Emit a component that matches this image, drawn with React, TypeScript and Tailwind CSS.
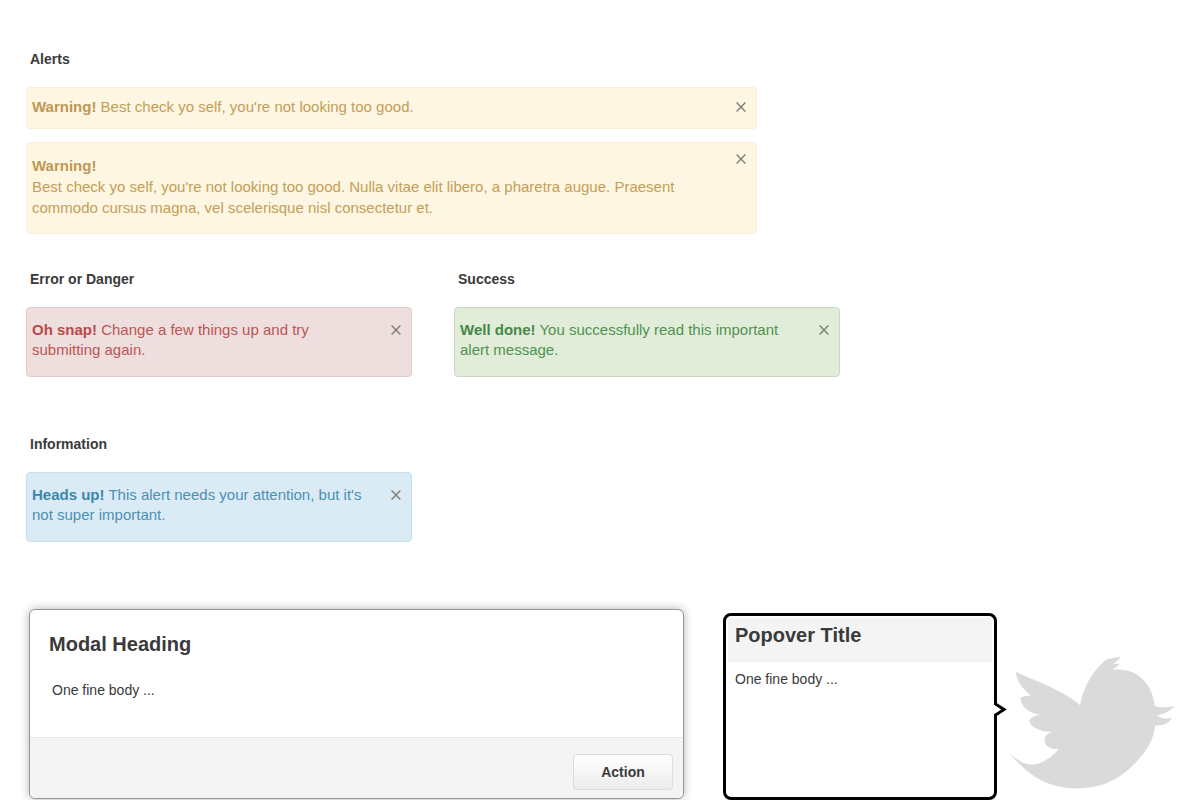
import type { ReactNode } from "react";

type Tone = "warning" | "danger" | "success" | "info";

const tones: Record<Tone, string> = {
  warning: "bg-[#fdf6e3] border-[#f9eedb] text-[#c49e57]",
  danger: "bg-[#efdede] border-[#e2cccd] text-[#bb5654]",
  success: "bg-[#e1edd9] border-[#c9d8c3] text-[#509350]",
  info: "bg-[#dbebf6] border-[#c7e0ea] text-[#4b90b3]",
};

const strongTones: Record<Tone, string> = {
  warning: "text-[#c09853]",
  danger: "text-[#b94a48]",
  success: "text-[#468847]",
  info: "text-[#3a87ad]",
};

function CloseIcon() {
  return (
    <svg viewBox="0 0 10 10" className="size-[10px]" aria-hidden="true">
      <path d="M0.6 0.6 9.4 9.4M9.4 0.6 0.6 9.4" stroke="#7f7d78" strokeWidth="1.4" fill="none" />
    </svg>
  );
}

function Alert({
  tone,
  title,
  className,
  stacked = false,
  children,
}: {
  tone: Tone;
  title: string;
  className: string;
  stacked?: boolean;
  children: ReactNode;
}) {
  return (
    <div
      role="alert"
      className={`flex items-start justify-between gap-4 rounded border px-[5px] text-[15px] ${tones[tone]} ${className}`}
    >
      <p className={stacked ? "pt-[6px] leading-[21px]" : "leading-5"}>
        <strong className={`${strongTones[tone]} ${stacked ? "block" : ""}`}>{title}</strong> {children}
      </p>
      <button type="button" aria-label="Close" className="flex size-5 shrink-0 items-center justify-center">
        <CloseIcon />
      </button>
    </div>
  );
}

function SectionTitle({ children }: { children: ReactNode }) {
  return <h2 className="mb-[18px] pl-1 text-sm leading-5 font-bold">{children}</h2>;
}

function Bird() {
  return (
    <svg viewBox="87 45 498 400" className="h-[133px] w-[166px]" role="img" aria-label="Bird">
      <path
        fill="#dadada"
        d="M106 92C145 112 190 127 229 147C257 161 282 175 300 193C308 149 331 94 378 56C391 51 407 52 423 46C418 56 409 64 399 69C406 68 413 68 419 68C414 76 405 82 396 86C422 84 445 87 464 97C499 116 520 151 525 195C544 202 563 199 583 196C574 210 553 220 531 223C546 235 560 235 577 231C568 247 550 256 526 254C523 293 500 333 463 370C419 416 367 440 307 443C235 446 178 423 139 389C119 372 103 355 87 338C106 352 128 370 151 371C184 373 213 351 237 325C213 326 192 316 194 298C193 285 203 279 216 273C180 274 151 259 147 240C150 230 164 226 181 221C146 218 120 197 122 169C131 166 142 165 153 164C128 147 111 121 106 92Z"
      />
    </svg>
  );
}

export default function App() {
  return (
    <main className="bg-white pt-[49px] pr-4 pl-[26px] font-['Liberation_Sans',Arial,sans-serif] text-[#3a3a3a]">
      <section className="max-w-[731px]">
        <SectionTitle>Alerts</SectionTitle>
        <div className="flex flex-col gap-[13px]">
          <Alert tone="warning" title="Warning!" className="pt-[9px] pb-[11px]">
            Best check yo self, you're not looking too good.
          </Alert>
          <Alert tone="warning" title="Warning!" stacked className="pt-[6px] pb-[15px]">
            <span className="block">
              Best check yo self, you're not looking too good. Nulla vitae elit libero, a pharetra augue. Praesent
              commodo cursus magna, vel scelerisque nisl consectetur et.
            </span>
          </Alert>
        </div>
      </section>

      <div className="mt-[35px] grid max-w-[814px] grid-cols-2 gap-x-[42px] gap-y-[57px]">
        <section>
          <SectionTitle>Error or Danger</SectionTitle>
          <Alert tone="danger" title="Oh snap!" className="pt-3 pb-4">
            Change a few things up and try submitting again.
          </Alert>
        </section>
        <section>
          <SectionTitle>Success</SectionTitle>
          <Alert tone="success" title="Well done!" className="pt-3 pb-4">
            You successfully read this important alert message.
          </Alert>
        </section>
        <section>
          <SectionTitle>Information</SectionTitle>
          <Alert tone="info" title="Heads up!" className="pt-3 pb-4">
            This alert needs your attention, but it's not super important.
          </Alert>
        </section>
      </div>

      <div className="mt-[67px] flex items-end">
        <section
          role="dialog"
          aria-labelledby="modal-title"
          className="mb-px ml-[3px] w-full max-w-[655px] rounded-md border border-[#969696] bg-white shadow-[0_0_10px_rgba(0,0,0,0.3)]"
        >
          <div className="px-[19px] pt-[22px] pb-[37px]">
            <h3 id="modal-title" className="text-xl leading-6 font-bold">
              Modal Heading
            </h3>
            <p className="mt-6 pl-[3px] text-sm leading-5">One fine body ...</p>
          </div>
          <footer className="flex justify-end rounded-b-md border-t border-[#e6e6e6] bg-[#f4f4f4] pt-4 pr-[10px] pb-2">
            <button
              type="button"
              className="h-9 w-[100px] rounded border border-[#dcdcdc] bg-linear-to-b from-white to-[#ececec] text-sm leading-5 font-bold"
            >
              Action
            </button>
          </footer>
        </section>

        <aside className="relative ml-[39px] h-[187px] w-[274px] shrink-0 rounded-lg border-3 border-black bg-white p-[2px]">
          <h3 className="h-11 rounded-t-[3px] border-b border-[#eeeeee] bg-[#f4f4f4] pt-[5px] pl-[7px] text-xl leading-6 font-bold">
            Popover Title
          </h3>
          <p className="mt-[7px] pl-[7px] text-sm leading-5">One fine body ...</p>
          <svg viewBox="0 0 16 21" className="absolute top-[83px] -right-[14px] h-[21px] w-4" aria-hidden="true">
            <path d="M0 5.5H5V15.5H0Z" fill="#fff" />
            <path d="M3.5 0V5L12 10.5L3.5 16V21" fill="#fff" stroke="#000" strokeWidth="3" />
          </svg>
        </aside>

        <div className="mb-[11px] ml-3 shrink-0">
          <Bird />
        </div>
      </div>
    </main>
  );
}
